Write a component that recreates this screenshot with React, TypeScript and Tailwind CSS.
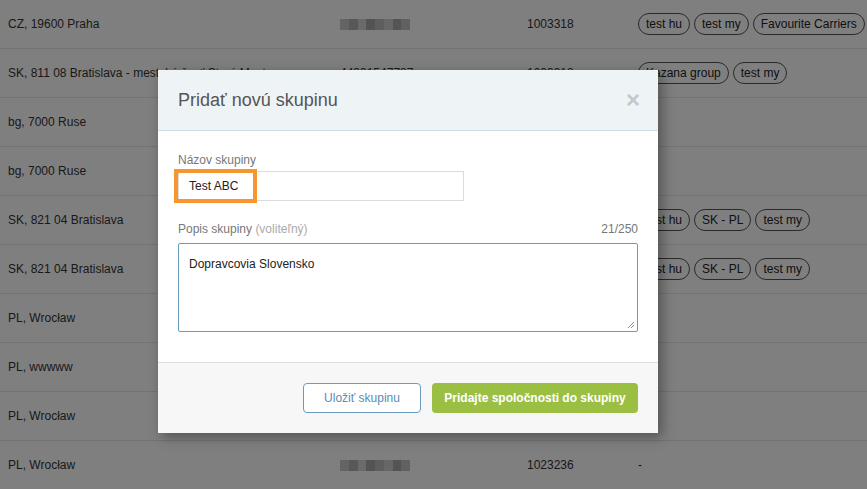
import React from "react"

interface Row {
  place: string
  blur: boolean
  id?: string
  tags?: string[]
  dash?: boolean
}

const ROWS: Row[] = [
  { place: "CZ, 19600 Praha", blur: true, id: "1003318", tags: ["test hu", "test my", "Favourite Carriers"] },
  { place: "SK, 811 08 Bratislava - mestská časť Staré Mesto", blur: false, id: "1003318", tags: ["Kazana group", "test my"] },
  { place: "bg, 7000 Ruse", blur: false },
  { place: "bg, 7000 Ruse", blur: false },
  { place: "SK, 821 04 Bratislava", blur: false, tags: ["test hu", "SK - PL", "test my"] },
  { place: "SK, 821 04 Bratislava", blur: false, tags: ["test hu", "SK - PL", "test my"] },
  { place: "PL, Wrocław", blur: false },
  { place: "PL, wwwww", blur: false },
  { place: "PL, Wrocław", blur: false },
  { place: "PL, Wrocław", blur: true, id: "1023236", dash: true },
]

const BLUR_SHADES = ["bg-[#c9c9c9]", "bg-[#b0b0b0]", "bg-[#d4d4d4]", "bg-[#a6a6a6]", "bg-[#bdbdbd]", "bg-[#cfcfcf]", "bg-[#a9a9a9]", "bg-[#c2c2c2]"]

function Blurred() {
  return (
    <div className="flex h-[11px] w-[70px] overflow-hidden">
      {BLUR_SHADES.map((c, i) => (
        <div key={i} className={`h-full flex-1 ${c}`} />
      ))}
    </div>
  )
}

function Tag({ label }: { label: string }) {
  return (
    <span className="rounded-full border border-[#555] px-[7px] leading-[20px] text-[12px] text-[#222] whitespace-nowrap">
      {label}
    </span>
  )
}

function TableRow({ row }: { row: Row }) {
  return (
    <div className="flex h-[49px] items-center border-b border-[#e6e6e6] text-[12px] text-[#333]">
      <div className="w-[340px] shrink-0 pl-2 whitespace-nowrap overflow-hidden">{row.place}</div>
      <div className="w-[187px] shrink-0">{row.blur ? <Blurred /> : row.place.startsWith("SK, 811") ? "44331547787" : null}</div>
      <div className="w-[111px] shrink-0">{row.id}</div>
      <div className="flex gap-[4px]">
        {row.tags?.map(t => <Tag key={t} label={t} />)}
        {row.dash && <span>-</span>}
      </div>
    </div>
  )
}

export default function App() {
  return (
    <div
      className="relative h-[489px] w-[867px] overflow-hidden bg-white"
      style={{ fontFamily: "'Liberation Sans', Arial, sans-serif" }}
    >
      {/* table behind */}
      <div className="flex flex-col">
        {ROWS.map((r, i) => <TableRow key={i} row={r} />)}
      </div>

      {/* backdrop */}
      <div className="absolute inset-0 bg-black/50" />

      {/* modal */}
      <div className="absolute left-[158px] top-[70px] w-[500px] bg-white shadow-[4px_4px_12px_rgba(0,0,0,0.35)]">
        <div className="flex h-[61px] items-center justify-between border-b border-[#cfdde6] bg-[#eef3f6] px-5">
          <h2 className="text-[18px] text-[#555]">Pridať novú skupinu</h2>
          <span className="mr-[-2px] text-[24px] font-bold leading-none text-[#c4c8cb]">×</span>
        </div>

        <div className="px-5 pt-[20px] pb-[30px]">
          <div className="text-[12px] text-[#777]">Názov skupiny</div>
          <div className="relative mt-[2px] w-[286px]">
            <div className="h-[30px] border border-[#dcdcdc] bg-white pl-[10px] text-[12px] leading-[28px] text-[#222]">
              Test ABC
            </div>
            {/* highlight annotation */}
            <div className="absolute left-[-4px] top-[-2px] h-[34px] w-[83px] border-[4px] border-[#f7962f]" />
          </div>

          <div className="mt-[19px] flex items-end justify-between text-[12px]">
            <div className="text-[#777]">
              Popis skupiny <span className="text-[#aaa]">(voliteľný)</span>
            </div>
            <div className="text-[#777]">21/250</div>
          </div>
          <div className="relative mt-[5px] h-[89px] rounded-[2px] border border-[#6a9bbf] px-[10px] pt-[11px] text-[12px] text-[#222]">
            Dopravcovia Slovensko
            <svg className="absolute bottom-[2px] right-[2px]" width="8" height="8" viewBox="0 0 8 8">
              <path d="M1 7 L7 1 M4 7 L7 4" stroke="#888" strokeWidth="1" fill="none" />
            </svg>
          </div>
        </div>

        <div className="flex h-[71px] items-center justify-end gap-[11px] border-t border-[#dedede] bg-[#f7f7f7] px-5">
          <button className="h-[30px] w-[118px] rounded-[4px] border border-[#6a9bbf] bg-white text-[12px] text-[#5a8db4]">
            Uložiť skupinu
          </button>
          <button className="h-[30px] w-[206px] rounded-[4px] bg-[#9bbf43] text-[12px] font-bold text-white">
            Pridajte spoločnosti do skupiny
          </button>
        </div>
      </div>
    </div>
  )
}
